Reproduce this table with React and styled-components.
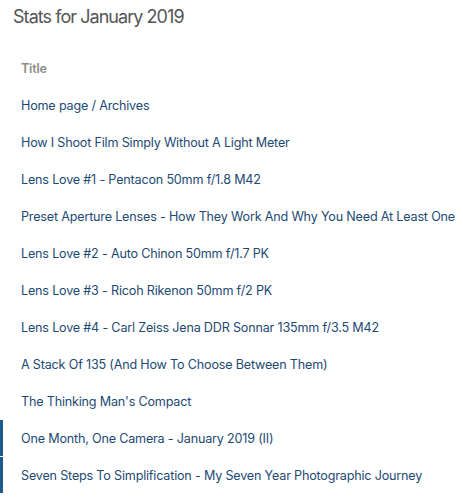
import React from "react";
import styled, { createGlobalStyle } from "styled-components";

const Global = createGlobalStyle`
  html, body { margin: 0; padding: 0; background: #fff; }
  body { font-family: Inter, "Noto Sans", "Liberation Sans", sans-serif; }
`;

const Page = styled.div`
  width: 463px;
  height: 500px;
  overflow: hidden;
  background: #fff;
`;

const Heading = styled.h1`
  margin: 0;
  height: 50px;
  padding: 6px 0 0 13px;
  box-sizing: border-box;
  font-size: 18px;
  font-weight: 400;
  color: #555;
  letter-spacing: -0.95px;
  line-height: 22px;
`;

const Table = styled.div`
  display: flex;
  flex-direction: column;
`;

const Row = styled.div`
  height: ${(p) => (p.$mark ? "36px" : "37px")};
  margin-bottom: ${(p) => (p.$mark ? "1px" : "0")};
  display: flex;
  align-items: center;
  padding-left: ${(p) => (p.$mark ? "18px" : "21px")};
  border-left: ${(p) => (p.$mark ? "3px solid #1e5b8c" : "none")};
  font-size: 12.6px;
  letter-spacing: -0.19px;
  white-space: nowrap;
  color: ${(p) => (p.$head ? "#8c8c8c" : "#1d4a74")};
  font-weight: ${(p) => (p.$head ? 600 : 400)};
`;

const items = [
  "Home page / Archives",
  "How I Shoot Film Simply Without A Light Meter",
  "Lens Love #1 - Pentacon 50mm f/1.8 M42",
  "Preset Aperture Lenses - How They Work And Why You Need At Least One",
  "Lens Love #2 - Auto Chinon 50mm f/1.7 PK",
  "Lens Love #3 - Ricoh Rikenon 50mm f/2 PK",
  "Lens Love #4 - Carl Zeiss Jena DDR Sonnar 135mm f/3.5 M42",
  "A Stack Of 135 (And How To Choose Between Them)",
  "The Thinking Man's Compact",
  "One Month, One Camera - January 2019 (II)",
  "Seven Steps To Simplification - My Seven Year Photographic Journey",
];

export default function App() {
  return (
    <Page>
      <Global />
      <Heading>Stats for January 2019</Heading>
      <Table>
        <Row $head>Title</Row>
        {items.map((t, i) => (
          <Row key={t} $mark={i >= 9}>
            {t}
          </Row>
        ))}
      </Table>
    </Page>
  );
}
